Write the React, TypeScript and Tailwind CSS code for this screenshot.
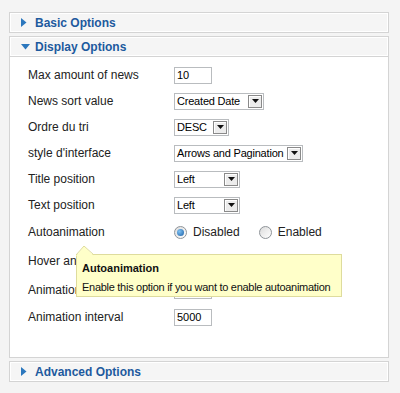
import React from "react";

const font = { fontFamily: '"Liberation Sans", Arial, sans-serif' };

function Header({ title, open }: { title: string; open?: boolean }) {
  return (
    <div className="h-[21px] flex items-center border border-[#d4d4d4] bg-[#f5f5f5] shadow-[inset_1px_1px_0_#ffffff,inset_-1px_-1px_0_#ffffff]">
      <div className="w-[25px] pl-[11px] flex items-center">
        {open ? (
          <svg width="9" height="6" viewBox="0 0 9 6">
            <polygon points="0,0 9,0 4.5,5.5" fill="#2b77bd" />
          </svg>
        ) : (
          <svg width="6" height="9" viewBox="0 0 6 9">
            <polygon points="0,0 5.5,4.5 0,9" fill="#2b77bd" />
          </svg>
        )}
      </div>
      <span className="text-[12px] font-bold text-[#1d5a9e] leading-none whitespace-nowrap">{title}</span>
    </div>
  );
}

function TextInput({ value }: { value: string }) {
  return (
    <div className="w-[38px] h-[17px] border border-[#b9bcbf] bg-white flex items-center pl-[2px] text-[11px] text-black leading-none whitespace-nowrap">
      {value}
    </div>
  );
}

function Select({ value, width }: { value: string; width: number }) {
  return (
    <div
      className="h-[17px] border border-[#b9bcbf] bg-white flex items-center justify-between text-[11px] text-black leading-none"
      style={{ width }}
    >
      <span className="pl-[2px] whitespace-nowrap tracking-[-0.2px]">{value}</span>
      <div className="shrink-0 w-[14px] h-[13px] mr-[1px] border border-[#8a8a8a] bg-[#ececec] flex items-center justify-center shadow-[inset_1px_1px_0_#ffffff]">
        <svg width="7" height="4" viewBox="0 0 7 4">
          <polygon points="0,0 7,0 3.5,4" fill="#111" />
        </svg>
      </div>
    </div>
  );
}

function Radio({ checked, label }: { checked?: boolean; label: string }) {
  return (
    <div className="flex items-center">
      <div className="w-[13px] h-[13px] rounded-full border border-[#8e9398] bg-[linear-gradient(135deg,#dcdcdc,#ffffff)] flex items-center justify-center">
        {checked && <div className="w-[7px] h-[7px] rounded-full bg-[radial-gradient(circle_at_35%_35%,#7fc1f2,#1a5fa6)]" />}
      </div>
      <span className="ml-[6px] text-[12px] text-[#222] leading-none whitespace-nowrap">{label}</span>
    </div>
  );
}

function Row({ label, h, children }: { label: string; h: number; children?: React.ReactNode }) {
  return (
    <div className="flex items-center" style={{ height: h }}>
      <div className="w-[164px] pl-[18px] text-[12px] text-[#222] leading-none whitespace-nowrap">{label}</div>
      <div className="flex items-center">{children}</div>
    </div>
  );
}

export default function App() {
  return (
    <div className="w-[400px] h-[393px] bg-[#f4f4f4] pt-[12px] pl-[9px] pr-[11px]" style={font}>
      <Header title="Basic Options" />
      <div className="mt-[3px]">
        <Header title="Display Options" open />
        <div className="relative h-[301px] bg-white border border-t-0 border-[#d4d4d4] pt-[5px]">
          <Row label="Max amount of news" h={26}>
            <TextInput value="10" />
          </Row>
          <Row label="News sort value" h={26}>
            <Select value="Created Date" width={90} />
          </Row>
          <Row label="Ordre du tri" h={26}>
            <Select value="DESC" width={55} />
          </Row>
          <Row label="style d'interface" h={26}>
            <Select value="Arrows and Pagination" width={129} />
          </Row>
          <Row label="Title position" h={26}>
            <Select value="Left" width={66} />
          </Row>
          <Row label="Text position" h={26}>
            <Select value="Left" width={66} />
          </Row>
          <Row label="Autoanimation" h={28}>
            <div className="flex items-center gap-[19px]">
              <Radio checked label="Disabled" />
              <Radio label="Enabled" />
            </div>
          </Row>
          <Row label="Hover animation" h={30} />
          <Row label="Animation speed" h={28}>
            <TextInput value="" />
          </Row>
          <Row label="Animation interval" h={26}>
            <TextInput value="5000" />
          </Row>

          <div className="absolute left-[66px] top-[197px] w-[266px] h-[43px] bg-[#ffffc9] border border-[#dedc9d] pl-[5px] pt-[7px]">
            <svg width="20" height="10" viewBox="0 0 20 10" className="absolute left-[-1px] top-[-9px]">
              <polygon points="0,10 8,0 18,10" fill="#ffffc9" />
              <polyline points="0,9 8,0 18,9" fill="none" stroke="#dedc9d" strokeWidth="1" />
            </svg>
            <div className="text-[11px] font-bold text-[#111] leading-[13px] whitespace-nowrap">Autoanimation</div>
            <div className="mt-[6px] text-[11px] tracking-[-0.28px] text-[#111] leading-[13px] whitespace-nowrap">
              Enable this option if you want to enable autoanimation
            </div>
          </div>
        </div>
      </div>
      <div className="mt-[3px]">
        <Header title="Advanced Options" />
      </div>
    </div>
  );
}
